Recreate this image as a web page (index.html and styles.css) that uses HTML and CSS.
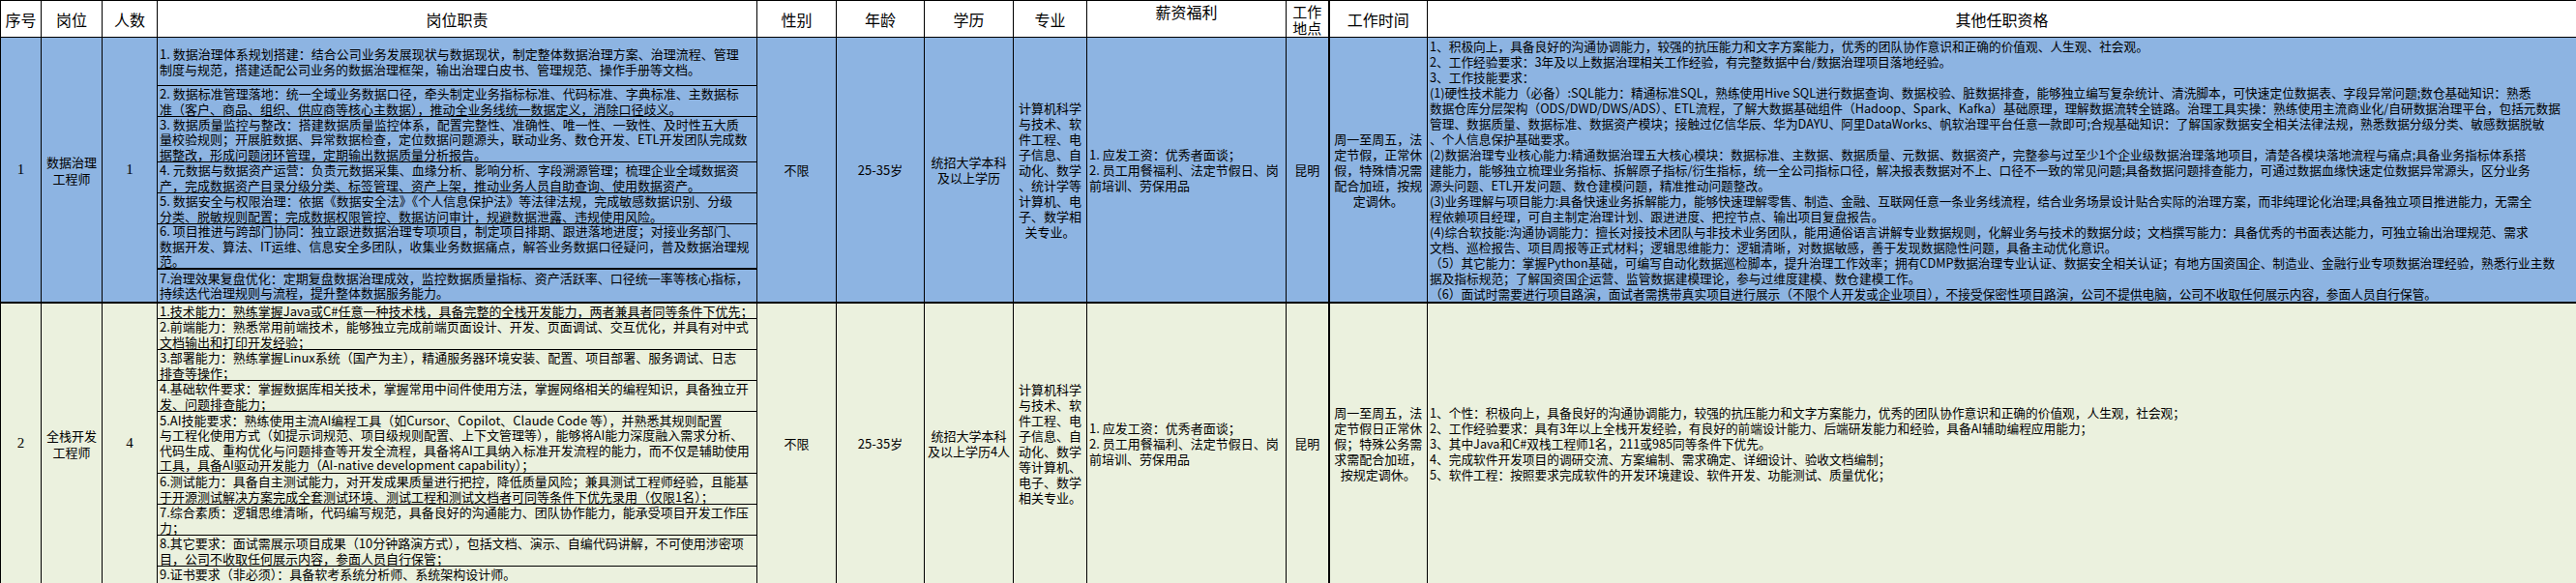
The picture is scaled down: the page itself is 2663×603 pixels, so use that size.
FILE: index.html
```html
<!DOCTYPE html>
<html lang="zh-CN">
<head>
<meta charset="utf-8">
<title>岗位需求表</title>
<link rel="stylesheet" href="styles.css">
</head>
<body>
<table class="sheet">
  <colgroup>
    <col class="c-no"><col class="c-post"><col class="c-num"><col class="c-duty">
    <col class="c-sex"><col class="c-age"><col class="c-edu"><col class="c-major">
    <col class="c-pay"><col class="c-place"><col class="c-time"><col class="c-other">
  </colgroup>
  <tr class="head">
    <th>序号</th>
    <th>岗位</th>
    <th>人数</th>
    <th>岗位职责</th>
    <th>性别</th>
    <th>年龄</th>
    <th>学历</th>
    <th>专业</th>
    <th class="top">薪资福利</th>
    <th class="two">工作<br>地点</th>
    <th class="thick-left">工作时间</th>
    <th>其他任职资格</th>
  </tr>
  <tr class="r1">
    <td class="num">1</td>
    <td class="post">数据治理<br>工程师</td>
    <td class="num">1</td>
    <td class="duty">
      <div class="items">
        <div class="item first">1. 数据治理体系规划搭建：结合公司业务发展现状与数据现状，制定整体数据治理方案、治理流程、管理<br>制度与规范，搭建适配公司业务的数据治理框架，输出治理白皮书、管理规范、操作手册等文档。</div>
        <div class="item l2">2. 数据标准管理落地：统一全域业务数据口径，牵头制定业务指标标准、代码标准、字典标准、主数据标<br>准（客户、商品、组织、供应商等核心主数据），推动全业务线统一数据定义，消除口径歧义。</div>
        <div class="item l3">3. 数据质量监控与整改：搭建数据质量监控体系，配置完整性、准确性、唯一性、一致性、及时性五大质<br>量校验规则；开展脏数据、异常数据检查，定位数据问题源头，联动业务、数仓开发、ETL开发团队完成数<br>据整改，形成问题闭环管理，定期输出数据质量分析报告。</div>
        <div class="item l2">4. 元数据与数据资产运营：负责元数据采集、血缘分析、影响分析、字段溯源管理；梳理企业全域数据资<br>产，完成数据资产目录分级分类、标签管理、资产上架，推动业务人员自助查询、使用数据资产。</div>
        <div class="item l2">5. 数据安全与权限治理：依据《数据安全法》《个人信息保护法》等法律法规，完成敏感数据识别、分级<br>分类、脱敏规则配置；完成数据权限管控、数据访问审计，规避数据泄露、违规使用风险。</div>
        <div class="item l3 heavy">6. 项目推进与跨部门协同：独立跟进数据治理专项项目，制定项目排期、跟进落地进度；对接业务部门、<br>数据开发、算法、IT运维、信息安全多团队，收集业务数据痛点，解答业务数据口径疑问，普及数据治理规<br>范。</div>
        <div class="item l2">7.治理效果复盘优化：定期复盘数据治理成效，监控数据质量指标、资产活跃率、口径统一率等核心指标，<br>持续迭代治理规则与流程，提升整体数据服务能力。</div>
      </div>
    </td>
    <td class="txt">不限</td>
    <td class="txt">25-35岁</td>
    <td class="txt">统招大学本科<br>及以上学历</td>
    <td class="txt">计算机科学<br>与技术、软<br>件工程、电<br>子信息、自<br>动化、数学<br>、统计学等<br>计算机、电<br>子、数学相<br>关专业。</td>
    <td class="txt left">1. 应发工资：优秀者面谈；<br>2. 员工用餐福利、法定节假日、岗<br>前培训、劳保用品</td>
    <td class="txt">昆明</td>
    <td class="txt thick-left">周一至周五，法<br>定节假，正常休<br>假，特殊情况需<br>配合加班，按规<br>定调休。</td>
    <td class="txt left top other">1、积极向上，具备良好的沟通协调能力，较强的抗压能力和文字方案能力，优秀的团队协作意识和正确的价值观、人生观、社会观。<br>2、工作经验要求：3年及以上数据治理相关工作经验，有完整数据中台/数据治理项目落地经验。<br>3、工作技能要求：<br>(1)硬性技术能力（必备）:SQL能力：精通标准SQL，熟练使用Hive SQL进行数据查询、数据校验、脏数据排查，能够独立编写复杂统计、清洗脚本，可快速定位数据表、字段异常问题;数仓基础知识：熟悉<br>数据仓库分层架构（ODS/DWD/DWS/ADS）、ETL流程，了解大数据基础组件（Hadoop、Spark、Kafka）基础原理，理解数据流转全链路。治理工具实操：熟练使用主流商业化/自研数据治理平台，包括元数据<br>管理、数据质量、数据标准、数据资产模块；接触过亿信华辰、华为DAYU、阿里DataWorks、帆软治理平台任意一款即可;合规基础知识：了解国家数据安全相关法律法规，熟悉数据分级分类、敏感数据脱敏<br>、个人信息保护基础要求。<br>(2)数据治理专业核心能力:精通数据治理五大核心模块：数据标准、主数据、数据质量、元数据、数据资产，完整参与过至少1个企业级数据治理落地项目，清楚各模块落地流程与痛点;具备业务指标体系搭<br>建能力，能够独立梳理业务指标、拆解原子指标/衍生指标，统一全公司指标口径，解决报表数据对不上、口径不一致的常见问题;具备数据问题排查能力，可通过数据血缘快速定位数据异常源头，区分业务<br>源头问题、ETL开发问题、数仓建模问题，精准推动问题整改。<br>(3)业务理解与项目能力:具备快速业务拆解能力，能够快速理解零售、制造、金融、互联网任意一条业务线流程，结合业务场景设计贴合实际的治理方案，而非纯理论化治理;具备独立项目推进能力，无需全<br>程依赖项目经理，可自主制定治理计划、跟进进度、把控节点、输出项目复盘报告。<br>(4)综合软技能:沟通协调能力：擅长对接技术团队与非技术业务团队，能用通俗语言讲解专业数据规则，化解业务与技术的数据分歧；文档撰写能力：具备优秀的书面表达能力，可独立输出治理规范、需求<br>文档、巡检报告、项目周报等正式材料；逻辑思维能力：逻辑清晰，对数据敏感，善于发现数据隐性问题，具备主动优化意识。<br>（5）其它能力：掌握Python基础，可编写自动化数据巡检脚本，提升治理工作效率；拥有CDMP数据治理专业认证、数据安全相关认证；有地方国资国企、制造业、金融行业专项数据治理经验，熟悉行业主数<br>据及指标规范；了解国资国企运营、监管数据建模理论，参与过维度建模、数仓建模工作。<br>（6）面试时需要进行项目路演，面试者需携带真实项目进行展示（不限个人开发或企业项目），不接受保密性项目路演，公司不提供电脑，公司不收取任何展示内容，参面人员自行保管。</td>
  </tr>
  <tr class="r2">
    <td class="num">2</td>
    <td class="post">全栈开发<br>工程师</td>
    <td class="num">4</td>
    <td class="duty">
      <div class="items">
        <div class="item l1">1.技术能力：熟练掌握Java或C#任意一种技术栈，具备完整的全栈开发能力，两者兼具者同等条件下优先；</div>
        <div class="item l2">2.前端能力：熟悉常用前端技术，能够独立完成前端页面设计、开发、页面调试、交互优化，并具有对中式<br>文档输出和打印开发经验；</div>
        <div class="item l2">3.部署能力：熟练掌握Linux系统（国产为主），精通服务器环境安装、配置、项目部署、服务调试、日志<br>排查等操作；</div>
        <div class="item l2">4.基础软件要求：掌握数据库相关技术，掌握常用中间件使用方法，掌握网络相关的编程知识，具备独立开<br>发、问题排查能力；</div>
        <div class="item l4">5.AI技能要求：熟练使用主流AI编程工具（如Cursor、Copilot、Claude Code 等），并熟悉其规则配置<br>与工程化使用方式（如提示词规范、项目级规则配置、上下文管理等），能够将AI能力深度融入需求分析、<br>代码生成、重构优化与问题排查等开发全流程，具备将AI工具纳入标准开发流程的能力，而不仅是辅助使用<br>工具，具备AI驱动开发能力（AI-native development capability）；</div>
        <div class="item l2">6.测试能力：具备自主测试能力，对开发成果质量进行把控，降低质量风险；兼具测试工程师经验，且能基<br>于开源测试解决方案完成全套测试环境、测试工程和测试文档者可同等条件下优先录用（仅限1名）；</div>
        <div class="item l2">7.综合素质：逻辑思维清晰，代码编写规范，具备良好的沟通能力、团队协作能力，能承受项目开发工作压<br>力；</div>
        <div class="item l2">8.其它要求：面试需展示项目成果（10分钟路演方式），包括文档、演示、自编代码讲解，不可使用涉密项<br>目，公司不收取任何展示内容，参面人员自行保管；</div>
        <div class="item l1">9.证书要求（非必须）：具备软考系统分析师、系统架构设计师。</div>
      </div>
    </td>
    <td class="txt">不限</td>
    <td class="txt">25-35岁</td>
    <td class="txt">统招大学本科<br>及以上学历4人</td>
    <td class="txt">计算机科学<br>与技术、软<br>件工程、电<br>子信息、自<br>动化、数学<br>等计算机、<br>电子、数学<br>相关专业。</td>
    <td class="txt left">1. 应发工资：优秀者面谈；<br>2. 员工用餐福利、法定节假日、岗<br>前培训、劳保用品</td>
    <td class="txt">昆明</td>
    <td class="txt thick-left">周一至周五，法<br>定节假日正常休<br>假；特殊公务需<br>求需配合加班，<br>按规定调休。</td>
    <td class="txt left other">1、个性：积极向上，具备良好的沟通协调能力，较强的抗压能力和文字方案能力，优秀的团队协作意识和正确的价值观，人生观，社会观；<br>2、工作经验要求：具有3年以上全栈开发经验，有良好的前端设计能力、后端研发能力和经验，具备AI辅助编程应用能力；<br>3、其中Java和C#双栈工程师1名，211或985同等条件下优先。<br>4、完成软件开发项目的调研交流、方案编制、需求确定、详细设计、验收文档编制；<br>5、软件工程：按照要求完成软件的开发环境建设、软件开发、功能测试、质量优化；</td>
  </tr>
</table>
</body>
</html>
```

FILE: styles.css
```css
html, body {
  margin: 0;
  padding: 0;
  background: #ffffff;
}

body {
  font-family: "Noto Sans CJK SC", "Noto Sans", sans-serif;
  color: #000000;
}

.sheet {
  border-collapse: collapse;
  table-layout: fixed;
  width: 2663px;
}

.c-no { width: 42px; }
.c-post { width: 63px; }
.c-num { width: 57px; }
.c-duty { width: 620px; }
.c-sex { width: 82px; }
.c-age { width: 91px; }
.c-edu { width: 92px; }
.c-major { width: 76px; }
.c-pay { width: 206px; }
.c-place { width: 44px; }
.c-time { width: 102px; }
.c-other { width: 1188px; }

.sheet th,
.sheet td {
  border: 1px solid #000000;
  padding: 0;
  overflow: hidden;
}

.head th {
  height: 36px;
  font-weight: normal;
  font-size: 16px;
  line-height: 20px;
  text-align: center;
  vertical-align: middle;
  background: #ffffff;
}

.head th.two {
  font-size: 15px;
  line-height: 17px;
}

.head th.top {
  vertical-align: top;
  padding-top: 1px;
}

.thick-left {
  border-left: 2px solid #000000 !important;
}

.r1 td {
  background: #8db4e2;
  height: 271px;
  border-bottom: 2px solid #000000;
}

.r2 td {
  background: #ebf1de;
  height: 289px;
}

.num {
  font-family: "Liberation Serif", serif;
  font-size: 15px;
  text-align: center;
  vertical-align: middle;
}

.post {
  font-size: 13px;
  line-height: 17px;
  text-align: center;
  vertical-align: middle;
}

.txt {
  font-size: 13px;
  line-height: 16px;
  text-align: center;
  vertical-align: middle;
  white-space: nowrap;
}

.txt.left {
  text-align: left;
  padding-left: 2px;
}

.txt.top {
  vertical-align: top;
  padding-top: 1px;
}

.txt.other {
  font-size: 12.7px;
}

.duty {
  vertical-align: top;
}

.items {
  display: flex;
  flex-direction: column;
}

.item {
  box-sizing: border-box;
  display: flex;
  align-items: center;
  padding: 0 2px;
  border-bottom: 1px solid #000000;
  font-size: 13px;
  line-height: 15.5px;
  white-space: nowrap;
}

.item:last-child {
  border-bottom: none;
}

.item.heavy {
  border-bottom: 2px solid #000000;
}

.item.first { height: 50px; }
.item.l1 { height: 16px; }
.item.l2 { height: 32px; }
.item.l3 { height: 47px; }
.item.l4 { height: 64px; }
```
